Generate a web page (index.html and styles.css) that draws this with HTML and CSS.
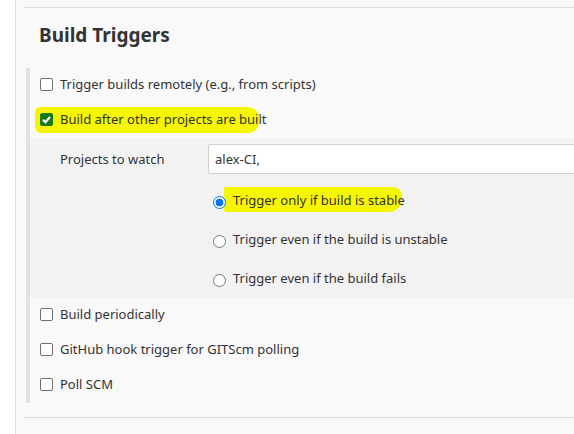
FILE: index.html
```html
<!DOCTYPE html>
<html>
<head>
<meta charset="utf-8">
<link rel="stylesheet" href="styles.css">
</head>
<body>
<div class="page">
  <div class="gutter"></div>
  <div class="panel">
    <div class="section">
      <h2 class="heading">Build Triggers</h2>
      <div class="list">
        <div class="row">
          <span class="cb"></span>
          <span class="label">Trigger builds remotely (e.g., from scripts)</span>
        </div>
        <div class="row">
          <span class="mark mark-a"></span>
          <span class="cb checked"><svg viewBox="0 0 13 13" width="13" height="13"><path d="M3 6.8 L5.4 9.2 L10 4" fill="none" stroke="#fff" stroke-width="2"/></svg></span>
          <span class="label">Build after other projects are built</span>
        </div>
        <div class="nested">
          <div class="field">
            <span class="field-label">Projects to watch</span>
            <div class="input">alex-CI,</div>
          </div>
          <div class="radios">
            <div class="radio-row">
              <span class="mark mark-b"></span>
              <span class="radio on"></span>
              <span class="label">Trigger only if build is stable</span>
            </div>
            <div class="radio-row">
              <span class="radio"></span>
              <span class="label">Trigger even if the build is unstable</span>
            </div>
            <div class="radio-row">
              <span class="radio"></span>
              <span class="label">Trigger even if the build fails</span>
            </div>
          </div>
        </div>
        <div class="row">
          <span class="cb"></span>
          <span class="label">Build periodically</span>
        </div>
        <div class="row">
          <span class="cb"></span>
          <span class="label">GitHub hook trigger for GITScm polling</span>
        </div>
        <div class="row">
          <span class="cb"></span>
          <span class="label">Poll SCM</span>
        </div>
      </div>
    </div>
  </div>
</div>
</body>
</html>
```
FILE: styles.css
```css
html, body {
  margin: 0;
  padding: 0;
  background: #fff;
}
body {
  font-family: "Noto Sans", "Open Sans", sans-serif;
  font-size: 13px;
  color: #333;
  width: 574px;
  height: 434px;
  overflow: hidden;
}
.page {
  display: flex;
  height: 434px;
}
.gutter {
  width: 15px;
  flex: none;
}
.panel {
  flex: 1;
  background: #f9f9f9;
  border-left: 1px solid #dcdcdc;
  padding-top: 7px;
}
.section {
  margin-left: 8px;
  border-top: 1px solid #dcdcdc;
  border-bottom: 1px solid #dcdcdc;
  padding-bottom: 14px;
}
.heading {
  margin: 0;
  padding: 14px 0 0 15px;
  height: 60px;
  box-sizing: border-box;
  font-size: 19px;
  font-weight: bold;
  line-height: 26px;
  color: #333;
}
.list {
  margin-left: 2px;
  border-left: 4px solid #e2e2e2;
}
.row {
  position: relative;
  display: flex;
  align-items: center;
  height: 35px;
  padding-left: 10px;
  padding-bottom: 2px;
  box-sizing: border-box;
}
.label {
  position: relative;
  line-height: 17px;
}
.cb {
  position: relative;
  width: 13px;
  height: 13px;
  box-sizing: border-box;
  border: 1px solid #707070;
  border-radius: 2px;
  background: #fff;
  margin-right: 7px;
  flex: none;
}
.cb.checked {
  background: #1a7a1a;
  border-color: #1a7a1a;
}
.cb svg {
  position: absolute;
  left: -1px;
  top: -1px;
}
.nested {
  background: #f2f2f2;
  padding: 6px 0 0 30px;
  height: 160px;
  box-sizing: border-box;
}
.field {
  display: flex;
  align-items: center;
  height: 30px;
}
.field-label {
  width: 148px;
  flex: none;
}
.input {
  flex: 1;
  height: 30px;
  box-sizing: border-box;
  background: #fff;
  border: 1px solid #cfcfcf;
  border-right: none;
  border-radius: 3px 0 0 3px;
  padding: 6px 6px;
  line-height: 17px;
}
.radios {
  margin: 7px 0 0 153px;
}
.radio-row {
  position: relative;
  display: flex;
  align-items: center;
  height: 39px;
}
.radio {
  position: relative;
  width: 13px;
  height: 13px;
  box-sizing: border-box;
  border: 1px solid #767676;
  border-radius: 50%;
  background: #fff;
  margin-right: 7px;
  margin-top: 3px;
  flex: none;
}
.radio.on {
  border: 1px solid #0075ff;
  background: radial-gradient(circle, #0075ff 0 3.6px, #fff 4.2px);
}
.mark {
  position: absolute;
  background: #f6f600;
}
.mark-a {
  left: 5px;
  top: 4px;
  width: 224px;
  height: 26px;
  border-radius: 4px 12px 10px 6px / 6px 10px 12px 6px;
}
.mark-b {
  left: 11px;
  top: 6px;
  width: 178px;
  height: 25px;
  border-radius: 2px 10px 14px 3px / 2px 8px 12px 3px;
}
```
